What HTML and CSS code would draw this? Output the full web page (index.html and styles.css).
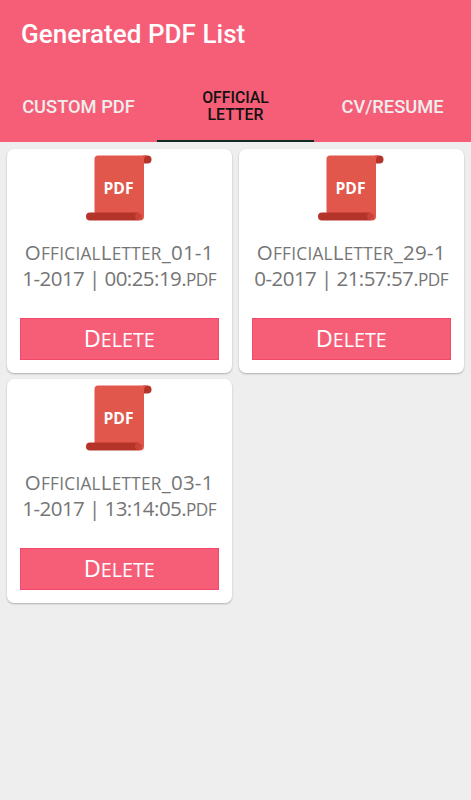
FILE: index.html
```html
<!DOCTYPE html>
<html lang="en">
<head>
    <meta charset="UTF-8">
    <meta name="viewport" content="width=device-width, initial-scale=1.0">
    <title>Generated PDF List</title>
    <link rel="stylesheet" href="styles.css">
</head>
<body>
    <svg class="defs" width="0" height="0">
        <symbol id="scroll" viewBox="0 0 66 66">
            <path d="M57 0.500h4.500q4 0 4 4t-4 4H57z" fill="#b5342a"/>
            <path d="M12 0.500h50q-4 0-4 5V62H8.500V4q0-3.500 3.500-3.500z" fill="#e2574c"/>
            <path d="M4 57.500h49v8H4q-4 0-4-4t4-4z" fill="#b5342a"/>
            <path d="M58 57v4.500q0 4-4 4t-4-4q0-4 4-4z" fill="#e2574c"/>
            <circle cx="52.500" cy="61.500" r="3.500" fill="#cb4338"/>
        </symbol>
    </svg>
    <header class="header">
        <h1 class="title">Generated PDF List</h1>
        <nav class="tabs">
            <a class="tab">CUSTOM PDF</a>
            <a class="tab active">OFFICIAL<br>LETTER</a>
            <a class="tab">CV/RESUME</a>
        </nav>
    </header>
    <main class="grid">
        <div class="card">
            <svg class="icon"><use href="#scroll"/><text x="17.500" y="38.700" textLength="30" lengthAdjust="spacingAndGlyphs">PDF</text></svg>
            <p class="name"><span class="first">O<small>fficial</small>L<small>etter</small>_01-1</span><span class="second">1-2017 | 00:25:19.<small>pdf</small></span></p>
            <button class="delete">D<small>elete</small></button>
        </div>
        <div class="card">
            <svg class="icon"><use href="#scroll"/><text x="17.500" y="38.700" textLength="30" lengthAdjust="spacingAndGlyphs">PDF</text></svg>
            <p class="name"><span class="first">O<small>fficial</small>L<small>etter</small>_29-1</span><span class="second">0-2017 | 21:57:57.<small>pdf</small></span></p>
            <button class="delete">D<small>elete</small></button>
        </div>
        <div class="card">
            <svg class="icon"><use href="#scroll"/><text x="17.500" y="38.700" textLength="30" lengthAdjust="spacingAndGlyphs">PDF</text></svg>
            <p class="name"><span class="first">O<small>fficial</small>L<small>etter</small>_03-1</span><span class="second">1-2017 | 13:14:05.<small>pdf</small></span></p>
            <button class="delete">D<small>elete</small></button>
        </div>
    </main>
</body>
</html>
```

FILE: styles.css
```css
* {
    box-sizing: border-box;
}
body {
    margin: 0;
    min-height: 100vh;
    background: #eeeeee;
    font-family: Roboto, sans-serif;
}
.defs {
    display: block;
}
.header {
    height: 142px;
    background: #f65e78;
    display: flex;
    flex-direction: column;
}
.title {
    margin: 0;
    padding-left: 21px;
    height: 72px;
    line-height: 69px;
    font-size: 26px;
    font-weight: 500;
    letter-spacing: 0.04px;
    color: #fff;
}
.tabs {
    display: grid;
    grid-template-columns: repeat(3, 1fr);
    height: 70px;
}
.tab {
    display: flex;
    align-items: center;
    justify-content: center;
    text-align: center;
    padding-bottom: 2px;
    font-size: 18.3px;
    font-weight: 500;
    color: #eeeeee;
}
.tab.active {
    padding-bottom: 0;
    font-size: 15.8px;
    line-height: 17.5px;
    color: #121212;
    border-bottom: 2px solid #102a27;
}
.grid {
    display: grid;
    grid-template-columns: 225.5px 225.5px;
    gap: 6px 6.5px;
    padding: 7px 6.5px;
}
.card {
    height: 224px;
    padding: 6px 13px 0;
    background: #fff;
    border-radius: 7px;
    box-shadow: 0 1px 2px rgba(0, 0, 0, 0.27);
    display: flex;
    flex-direction: column;
    align-items: center;
}
.icon {
    width: 66px;
    height: 66px;
}
.icon text {
    font: 700 16px "Open Sans", sans-serif;
    fill: #fff;
}
.name {
    margin: 18px 0 0;
    height: 79px;
    font: 400 20.5px/26px "Open Sans", sans-serif;
    color: #757575;
    white-space: nowrap;
    text-align: center;
}
.name span {
    display: block;
    height: 26px;
}
.name .first {
    letter-spacing: 0.25px;
}
.name .second {
    letter-spacing: -0.55px;
}
small {
    font-size: 0.84em;
    text-transform: uppercase;
}
.delete {
    width: 199px;
    height: 42px;
    padding: 0;
    border: 1px solid #f2486c;
    background: #f65e78;
    color: #fff;
    font: 400 23.5px/38px "Open Sans", sans-serif;
}
```
